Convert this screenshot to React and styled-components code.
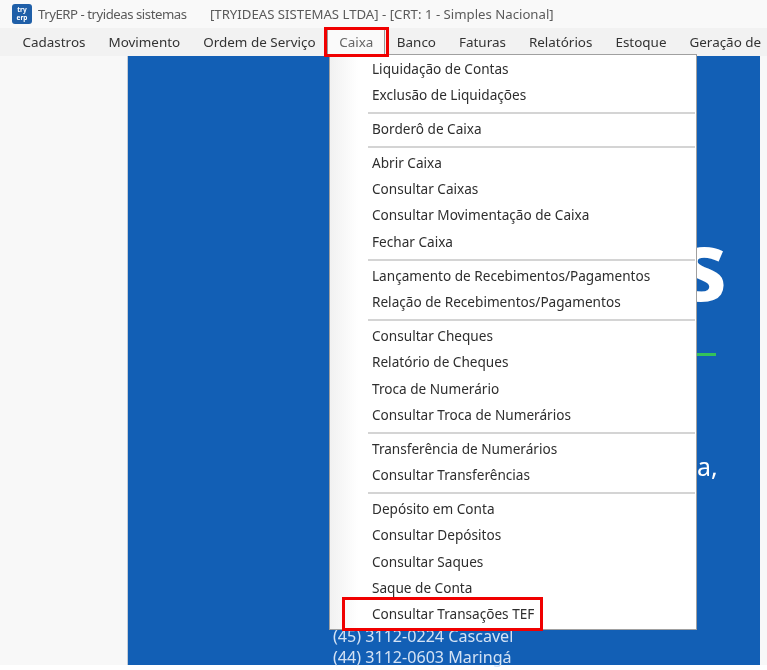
import React from 'react';
import styled, { createGlobalStyle } from 'styled-components';

const Global = createGlobalStyle`
  html, body {
    margin: 0;
    padding: 0;
    background: #ffffff;
  }
  body {
    font-family: "Noto Sans", "Open Sans", "Liberation Sans", sans-serif;
    color: #2e2e2e;
  }
`;

const Window = styled.div`
  position: relative;
  width: 767px;
  height: 670px;
  overflow: hidden;
  background: #ffffff;
  filter: blur(0.35px);
`;

const TitleBar = styled.div`
  height: 28px;
  display: flex;
  align-items: center;
  padding-left: 12px;
  font-size: 13.2px;
  color: #5a5a5a;
  background: #f9f9f9;
`;

const AppIcon = styled.div`
  width: 20px;
  height: 20px;
  border-radius: 3px;
  background: #1f5fa8;
  color: #ffffff;
  font-size: 6.5px;
  font-weight: 700;
  line-height: 8px;
  display: flex;
  flex-direction: column;
  align-items: center;
  justify-content: center;
  margin-right: 6px;
`;

const AppName = styled.span`
  width: 172px;
  letter-spacing: -0.47px;
  white-space: nowrap;
`;

const MenuBar = styled.div`
  height: 28px;
  display: flex;
  align-items: center;
  padding-left: 11px;
  background: #f2f2f2;
  font-size: 13.45px;
  color: #333333;
`;

const MenuItem = styled.div`
  height: 28px;
  display: flex;
  align-items: center;
  padding: 0 11.5px;
  white-space: nowrap;
  box-sizing: border-box;
  ${props => props.$active && `
    background: #fafafa;
    border: 1px solid #9a9a9a;
    border-bottom: none;
    padding: 0 11px 1px;
    color: #666666;
  `}
`;

const Body = styled.div`
  height: 609px;
  display: flex;
  padding-left: 127px;
  padding-right: 7px;
  background: #f8f8f8;
`;

const Panel = styled.div`
  flex: 1;
  background: #125fb5;
  color: #ffffff;
  display: flex;
  flex-direction: column;
  padding-left: 205px;
  border-left: 1px solid #c4ccd6;
  & > * {
    flex-shrink: 0;
  }
`;

const BigLetter = styled.div`
  margin: 157px 0 0 346px;
  height: 100px;
  font-family: "Open Sans", sans-serif;
  font-weight: 700;
  font-size: 97px;
  line-height: 100px;
`;

const GreenLine = styled.div`
  width: 20px;
  height: 3px;
  margin: 40px 0 0 363px;
  background: #34c25a;
`;

const Comma = styled.div`
  margin: 93px 0 0 364px;
  font-size: 25px;
  line-height: 34px;
`;

const Phone = styled.div`
  font-size: 16.1px;
  line-height: 21px;
  color: #d3e2f4;
  white-space: nowrap;
`;

const Phones = styled.div`
  margin-top: 143px;
`;

const Dropdown = styled.div`
  position: absolute;
  left: 329px;
  top: 54px;
  width: 368px;
  height: 576px;
  box-sizing: border-box;
  background: linear-gradient(90deg, #f1f1f1 0, #ffffff 28px);
  border: 1px solid #a0a0a0;
  font-size: 13.6px;
`;

const Row = styled.div`
  height: 26.4px;
  display: flex;
  align-items: center;
  padding-left: 42px;
  color: #2e2e2e;
  white-space: nowrap;
`;

const Sep = styled.div`
  height: 2px;
  margin: 4px 1px 1.4px 38px;
  background: #d4d4d4;
`;

const Highlight = styled.div`
  position: absolute;
  left: ${props => props.$x}px;
  top: ${props => props.$y}px;
  width: ${props => props.$w}px;
  height: ${props => props.$h}px;
  box-sizing: border-box;
  border: 3px solid #f00000;
`;

const groups = [
  ['Liquidação de Contas', 'Exclusão de Liquidações'],
  ['Borderô de Caixa'],
  ['Abrir Caixa', 'Consultar Caixas', 'Consultar Movimentação de Caixa', 'Fechar Caixa'],
  ['Lançamento de Recebimentos/Pagamentos', 'Relação de Recebimentos/Pagamentos'],
  ['Consultar Cheques', 'Relatório de Cheques', 'Troca de Numerário', 'Consultar Troca de Numerários'],
  ['Transferência de Numerários', 'Consultar Transferências'],
  ['Depósito em Conta', 'Consultar Depósitos', 'Consultar Saques', 'Saque de Conta', 'Consultar Transações TEF'],
];

const menus = ['Cadastros', 'Movimento', 'Ordem de Serviço', 'Caixa', 'Banco', 'Faturas', 'Relatórios', 'Estoque', 'Geração de'];

const App = () => {
  return (
    <Window>
      <Global />
      <TitleBar>
        <AppIcon><span>try</span><span>erp</span></AppIcon>
        <AppName>TryERP - tryideas sistemas</AppName>
        <span>[TRYIDEAS SISTEMAS LTDA] - [CRT: 1 - Simples Nacional]</span>
      </TitleBar>
      <MenuBar>
        {menus.map(m => <MenuItem key={m} $active={m === 'Caixa'}>{m}</MenuItem>)}
      </MenuBar>
      <Body>
        <Panel>
          <BigLetter>s</BigLetter>
          <GreenLine />
          <Comma>a,</Comma>
          <Phones>
            <Phone>(45) 3112-0224 Cascavel</Phone>
            <Phone>(44) 3112-0603 Maringá</Phone>
          </Phones>
        </Panel>
      </Body>
      <Dropdown>
        {groups.map((g, i) => (
          <React.Fragment key={i}>
            {i > 0 && <Sep />}
            {g.map(t => <Row key={t}>{t}</Row>)}
          </React.Fragment>
        ))}
      </Dropdown>
      <Highlight $x={324} $y={27} $w={65} $h={30} />
      <Highlight $x={342} $y={597} $w={201} $h={34} />
    </Window>
  );
};

export default App;
